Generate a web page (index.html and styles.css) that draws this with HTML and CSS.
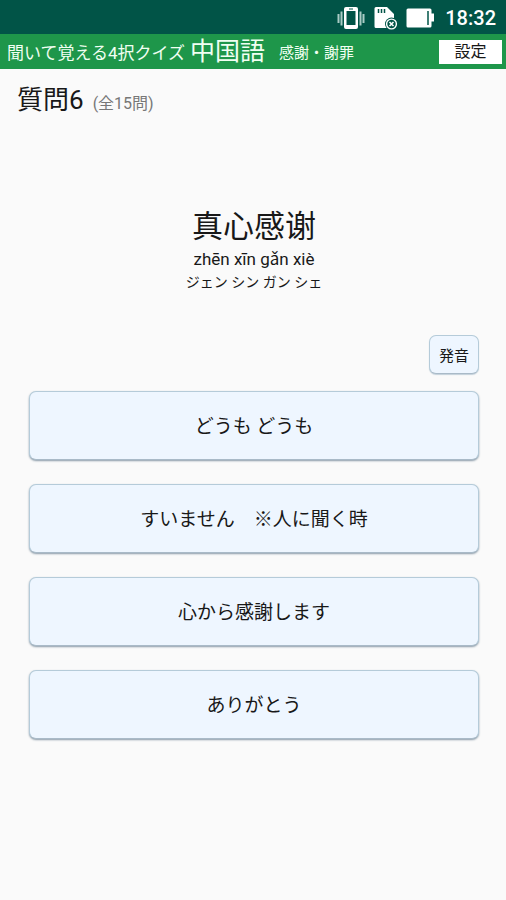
FILE: index.html
```html
<!DOCTYPE html>
<html lang="ja">
<head>
<meta charset="utf-8">
<meta name="viewport" content="width=device-width, initial-scale=1">
<title>聞いて覚える4択クイズ 中国語</title>
<link rel="stylesheet" href="styles.css">
</head>
<body>
<div class="status-bar">
  <svg class="icon-vibrate" viewBox="0 0 28 24" aria-hidden="true">
    <path d="M1.500 8v9M4.500 5.500v14M23.500 5.500v14M26.500 8v9" stroke="#a9cbc5" stroke-width="2" fill="none"/>
    <path fill-rule="evenodd" d="M9 1h10a2 2 0 0 1 2 2v18a2 2 0 0 1-2 2H9a2 2 0 0 1-2-2V3a2 2 0 0 1 2-2zM9.500 5v14h9V5z" fill="#fff"/>
    <path d="M12 3h4" stroke="#015447" stroke-width="1"/>
  </svg>
  <svg class="icon-card" viewBox="0 0 24 24" aria-hidden="true">
    <path d="M2 1h11l7 7v14H2a1.500 1.500 0 0 1-1.500-1.500v-18A1.500 1.500 0 0 1 2 1z" fill="#fff"/>
    <path d="M4.500 3v4M7.500 3v4M10.500 3v4" stroke="#015447" stroke-width="1.500"/>
    <circle cx="17.500" cy="18" r="6.500" fill="#015447"/>
    <circle cx="17.500" cy="18" r="4.900" fill="none" stroke="#fff" stroke-width="1.400"/>
    <path d="M15.500 16l4 4m0-4l-4 4" stroke="#fff" stroke-width="1.600"/>
  </svg>
  <svg class="icon-battery" viewBox="0 0 28 20" aria-hidden="true">
    <path d="M2 0.500h22a1.500 1.500 0 0 1 1.500 1.500v3.500H28v8h-2.500v4.500a1.500 1.500 0 0 1-1.500 1.500H2A1.500 1.500 0 0 1 .5 18V2A1.500 1.500 0 0 1 2 .5z" fill="#fff"/>
    <path d="M22 3v14" stroke="#015447" stroke-width="1.500"/>
  </svg>
  <span class="clock">18:32</span>
</div>
<header class="app-bar">
  <span class="app-name">聞いて覚える4択クイズ</span>
  <h1 class="language">中国語</h1>
  <span class="category">感謝・謝罪</span>
  <button class="settings" type="button">設定</button>
</header>
<main class="quiz">
  <div class="progress">
    <h2 class="number">質問6</h2>
    <span class="total">(全15問)</span>
  </div>
  <section class="prompt">
    <p class="phrase" lang="zh-CN">真心感谢</p>
    <p class="pinyin" lang="zh-Latn">zhēn xīn gǎn xiè</p>
    <p class="kana">ジェン シン ガン シェ</p>
  </section>
  <div class="choices">
    <button class="card speak" type="button">発音</button>
    <button class="card choice" type="button">どうも どうも</button>
    <button class="card choice" type="button">すいません　※人に聞く時</button>
    <button class="card choice" type="button">心から感謝します</button>
    <button class="card choice" type="button">ありがとう</button>
  </div>
</main>
</body>
</html>
```
FILE: styles.css
```css
* {
  box-sizing: border-box;
}

body {
  margin: 0;
  background: #fafafa;
  color: #181818;
  font-family: Roboto, "Noto Sans CJK JP", sans-serif;
}

h1, h2, p {
  margin: 0;
  font-weight: 400;
}

button {
  font-family: inherit;
  color: inherit;
  padding: 0;
  border: 0;
}

.status-bar {
  display: flex;
  align-items: center;
  justify-content: flex-end;
  height: 34px;
  padding: 2px 10px 0 0;
  background: #015447;
  color: #fff;
}

.icon-vibrate {
  width: 28px;
  height: 24px;
  margin-right: 9px;
}

.icon-card {
  width: 24px;
  height: 24px;
  margin-right: 8px;
}

.icon-battery {
  width: 28px;
  height: 20px;
  margin-right: 11px;
}

.clock {
  font-size: 20px;
  font-weight: 500;
  line-height: 24px;
}

.app-bar {
  display: flex;
  align-items: center;
  height: 35px;
  padding: 0 4px 0 7px;
  background: #1e964a;
  color: #f0fff2;
  white-space: nowrap;
}

.app-name {
  font-size: 17px;
}

.language {
  margin-left: 5px;
  font-size: 25px;
  line-height: 34px;
}

.category {
  margin-left: 14px;
  font-size: 15px;
}

.settings {
  width: 63px;
  height: 24px;
  margin-left: auto;
  background: #fff;
  color: #181818;
  font-size: 16px;
  line-height: 24px;
}

.quiz {
  padding: 12px 27px 28px 29px;
}

.progress {
  display: flex;
  align-items: baseline;
  gap: 9px;
  margin-left: -12px;
}

.number {
  font-size: 26px;
  line-height: 38px;
}

.total {
  color: #777;
  font-size: 16px;
}

.prompt {
  padding-top: 82px;
  text-align: center;
}

.phrase {
  font-family: "Noto Sans CJK SC", sans-serif;
  font-size: 31px;
  line-height: 46px;
}

.pinyin {
  font-size: 17px;
  line-height: 24px;
}

.kana {
  font-size: 14px;
  line-height: 22px;
}

.choices {
  display: flex;
  flex-direction: column;
  gap: 24px;
  padding-top: 42px;
}

.card {
  border: 1px solid #b5cbd9;
  border-bottom-color: #a9bac8;
  border-radius: 7px;
  background: #eef6ff;
  box-shadow: 0 1px 2px #8a9aa8;
}

.speak {
  align-self: flex-end;
  width: 50px;
  height: 39px;
  margin-bottom: -7px;
  font-size: 15px;
  box-shadow: 0 1px 1px #c3d0da;
}

.choice {
  height: 69px;
  padding-bottom: 2px;
  font-size: 19px;
}
```
